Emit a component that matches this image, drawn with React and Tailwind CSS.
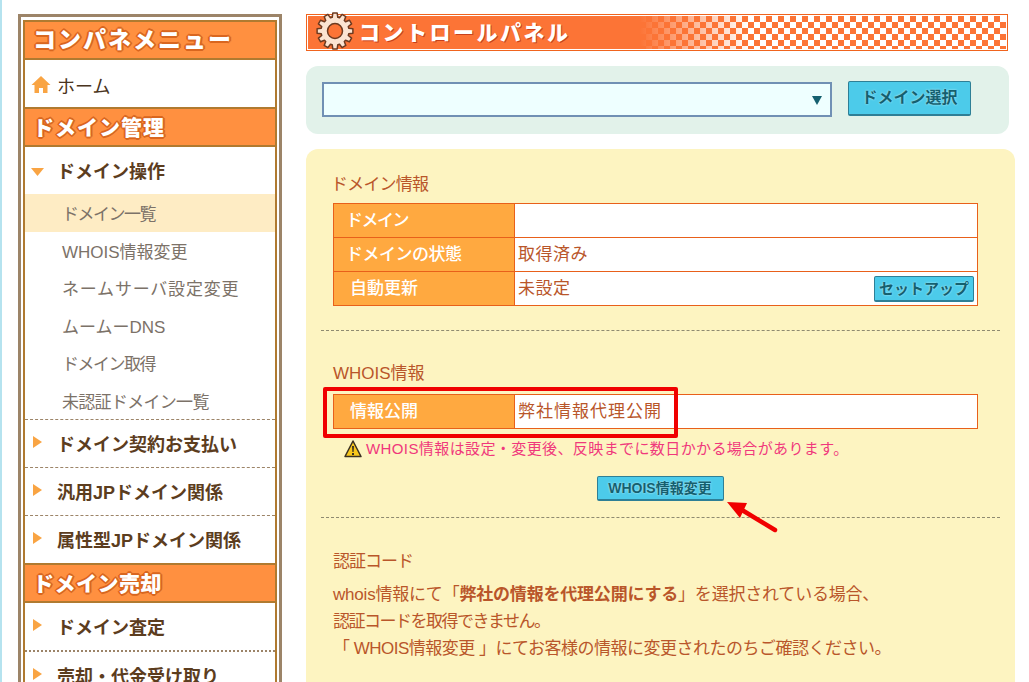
import React from "react"

const jp = "font-['Liberation_Sans','Noto_Sans_CJK_JP',sans-serif]"

function SideHead({ children, className }) {
  return (
    <div className="h-10 shrink-0 border-y-2 border-[#b07a30] bg-[#ff9040] pl-2 pt-[1px] flex items-center">
      <span className={`leading-none font-black text-white [text-shadow:-2px_0_0_#d9661f,2px_0_0_#d9661f,0_-2px_0_#d9661f,0_2px_0_#d9661f,-1px_-1px_0_#d9661f,1px_1px_0_#d9661f,1px_-1px_0_#d9661f,-1px_1px_0_#d9661f] ${className}`}>
        {children}
      </span>
    </div>
  )
}

function Caret({ down }) {
  return (
    <svg width="14" height="14" viewBox="0 0 14 14" className="shrink-0">
      {down ? <path d="M1 3h13L7.500 11z" fill="#f9a443" /> : <path d="M3 1l9 6-9 6z" fill="#f9a443" />}
    </svg>
  )
}

function MenuGroup({ label, className }) {
  return (
    <div className={`shrink-0 flex items-center pl-[5px] pt-[2px] gap-[13px] border-dashed border-[#9c8468] ${className}`}>
      <div className="-mt-1.5"><Caret /></div>
      <span className="text-[18px] font-bold leading-none text-[#5c3d1e]">{label}</span>
    </div>
  )
}

function SubItem({ label, active, className }) {
  return (
    <div className={`h-[37.5px] shrink-0 pl-[37px] pt-[4px] flex items-center text-[17px] text-[#7c7268] ${active ? "bg-[#feecc4]" : ""} ${className}`}>
      {label}
    </div>
  )
}

function Sidebar() {
  return (
    <aside className="w-[264px] h-[700px] shrink-0 mt-[14px] ml-[16px] border-[3px] border-[#9c8468] bg-white px-[2px] pt-[3px] overflow-hidden">
      <div className="h-full border-x-2 border-[#b07a30] flex flex-col">
        <SideHead className="text-[23px] tracking-[2px]">コンパネメニュー</SideHead>
        <div className="h-[47px] shrink-0 flex items-center pl-[6px] pt-[6px] gap-[6px]">
          <svg width="20" height="20" viewBox="0 0 20 20" className="shrink-0 -mt-1">
            <path d="M10 1L0.5 10h3v8h4.500v-5h4v5h4.500v-8h3z" fill="#f9a443" />
          </svg>
          <span className="text-[18px] leading-none text-[#4a3420]">ホーム</span>
        </div>
        <SideHead className="text-[21px] tracking-[1px]">ドメイン管理</SideHead>
        <div className="h-[47px] shrink-0 flex items-center pl-[5px] pt-[2px] gap-[13px]">
          <Caret down />
          <span className="text-[18px] font-bold leading-none text-[#5c3d1e]">ドメイン操作</span>
        </div>
        <SubItem label="ドメイン一覧" active className="tracking-[-1.500px]" />
        <SubItem label="WHOIS情報変更" />
        <SubItem label="ネームサーバ設定変更" className="tracking-[0.800px]" />
        <SubItem label="ムームーDNS" />
        <SubItem label="ドメイン取得" className="tracking-[-1.500px]" />
        <div className="border-b border-dashed border-[#9c8468]">
          <SubItem label="未認証ドメイン一覧" className="tracking-[-0.700px]" />
        </div>
        <MenuGroup label="ドメイン契約お支払い" className="h-12 border-b" />
        <MenuGroup label="汎用JPドメイン関係" className="h-12 border-b" />
        <MenuGroup label="属性型JPドメイン関係" className="h-[47px]" />
        <SideHead className="text-[21px] tracking-[0.500px]">ドメイン売却</SideHead>
        <MenuGroup label="ドメイン査定" className="h-[49px] border-b-2 border-dotted" />
        <MenuGroup label="売却・代金受け取り" className="h-12" />
      </div>
    </aside>
  )
}

function BlueButton({ children, className }) {
  return (
    <button className={`rounded-[2px] border border-[#2e7f96] border-b-2 bg-[#4ccbea] text-[#14606f] font-bold leading-none whitespace-nowrap flex items-center justify-center [text-shadow:0_0_2px_#c8f2fb] ${className}`}>
      {children}
    </button>
  )
}

function InfoRow({ label, labelClass, children, bottom }) {
  return (
    <div className={`flex ${bottom ? "h-[33px]" : "h-[34px] border-b border-[#e8601a]"}`}>
      <div className={`w-[181px] shrink-0 border-r border-[#e8601a] bg-[#ffa940] text-[17px] font-medium text-white flex items-center ${labelClass}`}>
        {label}
      </div>
      <div className="flex-1 flex items-center justify-between px-[3px] text-[17px] text-[#b9562a]">
        {children}
      </div>
    </div>
  )
}

// 12 tooth cog, outline is worked out from the angles
function gearPath() {
  const pts = []
  for (let i = 0; i < 12; i++) {
    const a = (i * Math.PI * 2) / 12
    const at = (r, d) => `${(19 + r * Math.cos(a + d)).toFixed(1)} ${(19 + r * Math.sin(a + d)).toFixed(1)}`
    pts.push(at(14, -0.2), at(18, -0.12), at(18, 0.12), at(14, 0.2))
  }
  return `M${pts.join("L")}z`
}

function TitleBar() {
  return (
    <div className="relative h-[37px] border border-[#f0641e] p-[1px] bg-white">
      <div className="relative h-full bg-[#fc7436] flex items-center overflow-hidden">
        <div className="absolute inset-y-0 left-[332px] right-0 bg-white bg-[repeating-conic-gradient(#fc7436_0_25%,#ffffff_0_50%)] bg-[length:12px_12px]" />
        <div className="absolute inset-y-0 left-[332px] w-[110px] bg-gradient-to-r from-[#fc7436] to-transparent" />
        <span className="relative ml-[51px] text-[21px] font-black leading-none tracking-[2.500px] text-white [text-shadow:1px_1px_0_#c8401a]">
          コントロールパネル
        </span>
      </div>
      <svg width="38" height="38" viewBox="0 0 38 38" className="absolute left-[9px] -top-[3px]">
        <path d={gearPath()} fill="#fbe4d2" stroke="#6d3a20" strokeWidth="1.500" strokeLinejoin="round" />
        <circle cx="19" cy="19" r="7.500" fill="#fc7436" stroke="#6d3a20" strokeWidth="1.500" />
      </svg>
    </div>
  )
}

export default function App() {
  return (
    <div className={`relative w-[1029px] h-[682px] overflow-hidden bg-white flex border-l-2 border-[#b5e3ef] ${jp}`}>
      <Sidebar />

      <main className="ml-[24px] w-[709px] shrink-0 pt-[14px] flex flex-col">
        <div className="w-[702px]">
          <TitleBar />
        </div>

        {/* domain select */}
        <div className="w-[703px] h-[68px] mt-[15px] rounded-[12px] bg-[#e2f2ea] flex items-start pl-[16px] pt-[16px] gap-[16px]">
          <div className="w-[510px] h-[35px] border-2 border-[#7090b4] bg-[#eeffff] flex items-center justify-end pr-[8px]">
            <svg width="10" height="10" viewBox="0 0 10 10">
              <path d="M0 1h10L5 10z" fill="#14606f" />
            </svg>
          </div>
          <BlueButton className="w-[123px] h-[35px] -mt-[1px] text-[16px]">ドメイン選択</BlueButton>
        </div>

        {/* yellow panel */}
        <div className="relative w-[709px] flex-1 mt-[15px] rounded-t-[12px] bg-[#fdf4c1]">
          <div className="px-[15px] pt-[25px]">
            <h2 className="pl-[10px] text-[17px] leading-[22px] font-normal tracking-[-0.800px] text-[#b9562a]">ドメイン情報</h2>
            <div className="ml-[12px] mt-[7px] w-[645px] border border-[#e8601a] bg-white">
              <InfoRow label="ドメイン" labelClass="pl-[12px] tracking-[-1.500px]" />
              <InfoRow label="ドメインの状態" labelClass="pl-[12px] tracking-[-0.500px]">
                <span className="tracking-[0.500px]">取得済み</span>
              </InfoRow>
              <InfoRow label="自動更新" labelClass="pl-[16px]" bottom>
                <span className="tracking-[0.500px]">未設定</span>
                <BlueButton className="w-[100px] h-[26px] text-[15px]">セットアップ</BlueButton>
              </InfoRow>
            </div>
          </div>

          <div className="mt-[24px] mx-[15px] w-[679px] border-t border-dashed border-[#8f8a70]" />

          <div className="px-[27px] pt-[32px]">
            <h2 className="text-[17px] leading-[22px] font-normal text-[#b9562a]">WHOIS情報</h2>
            <div className="mt-[9px] w-[645px] border border-[#e8601a] bg-white">
              <InfoRow label="情報公開" labelClass="pl-[16px]" bottom>
                <span className="tracking-[1px]">弊社情報代理公開</span>
              </InfoRow>
            </div>
            <div className="mt-[10px] ml-[11px] flex items-center gap-[4px] text-[15px] leading-[20px] tracking-[0.400px] text-[#f0387c]">
              <svg width="18" height="18" viewBox="0 0 18 18" className="shrink-0">
                <path d="M9 1L17 16.500H1z" fill="#f8c81c" stroke="#3a3020" strokeWidth="1.500" strokeLinejoin="round" />
                <path d="M8 6h2l-.4 6h-1.200zM8 13h2v2H8z" fill="#3a3020" />
              </svg>
              <span>WHOIS情報は設定・変更後、反映までに数日かかる場合があります。</span>
            </div>
            <div className="mt-[17px] flex justify-center w-[654px]">
              <BlueButton className="w-[127px] h-[25px] text-[14px]">WHOIS情報変更</BlueButton>
            </div>
          </div>

          <div className="mt-[16px] mx-[15px] w-[679px] border-t border-dashed border-[#8f8a70]" />

          <div className="px-[27px] pt-[33px] text-[17px] leading-[27px] text-[#b9562a]">
            <h2 className="text-[17px] leading-[22px] font-normal tracking-[-1px] mb-[8px]">認証コード</h2>
            <p className="tracking-[-0.200px]">whois情報にて「<b>弊社の情報を代理公開にする</b>」を選択されている場合、</p>
            <p className="tracking-[-1.500px]">認証コードを取得できません。</p>
            <p className="tracking-[-0.500px]">「 WHOIS情報変更 」にてお客様の情報に変更されたのちご確認ください。</p>
          </div>

          {/* red annotation box */}
          <div className="absolute left-[17px] top-[238px] w-[355px] h-[51px] border-[4px] border-[#f00000] rounded-[2px]" />
          {/* red arrow */}
          <svg width="56" height="36" viewBox="0 0 56 36" className="absolute left-[418px] top-[350px]">
            <path d="M51 31L18 11" stroke="#f00000" strokeWidth="4.500" strokeLinecap="round" />
            <path d="M3 3L23 4L16 19z" fill="#f00000" />
          </svg>
        </div>
      </main>
    </div>
  )
}
